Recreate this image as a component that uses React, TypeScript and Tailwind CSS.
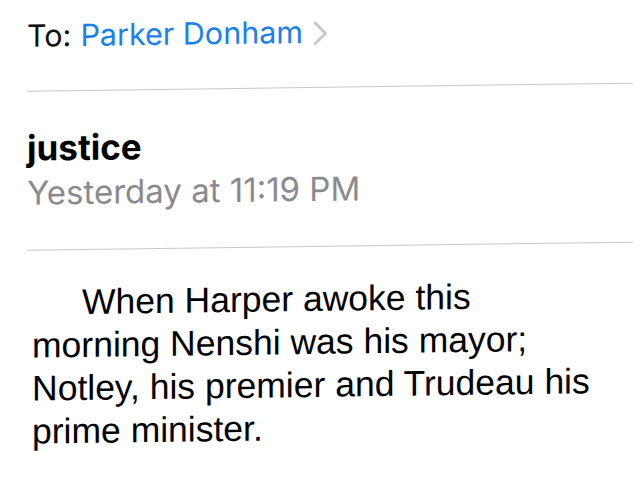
export default function App() {
  return (
    <div className="w-[633px] h-[482px] overflow-hidden bg-white">
      <div className="origin-left skew-y-[-0.75deg] pl-[27px] pt-[4px]">
        {/* Header */}
        <div className="pt-[14px] flex items-center h-[50px] font-['Inter',sans-serif] text-[30.5px] leading-[36px]">
          <span className="text-[#111]">To:</span>
          <span className="ml-[9px] text-[#1a80ef]">Parker Donham</span>
          <svg className="ml-[10px] mt-[2px]" width="15" height="25" viewBox="0 0 15 25" fill="none">
            <path d="M2 2 L12.5 12.5 L2 23" stroke="#c7c7cc" strokeWidth="2.8" strokeLinecap="round" strokeLinejoin="round" />
          </svg>
        </div>
        <div className="mt-[37px] h-px bg-[#c8c8cc]" />

        <div className="mt-[36px] font-['Inter',sans-serif]">
          <div className="text-[35px] leading-[40px] font-bold text-black">justice</div>
          <div className="mt-[6px] text-[33px] leading-[38px] text-[#8a8a8e]">Yesterday at 11:19 PM</div>
        </div>
        <div className="mt-[38px] h-px bg-[#c8c8cc]" />

        {/* Body */}
        <p className="mt-[31px] pl-[5px] font-['Liberation_Sans',Arial,sans-serif] text-[35.5px] leading-[43px] text-black">
          <span className="pl-[50px]">When Harper awoke this</span>
          <br />
          morning Nenshi was his mayor;
          <br />
          Notley, his premier and Trudeau his
          <br />
          prime minister.
        </p>
      </div>
    </div>
  );
}
